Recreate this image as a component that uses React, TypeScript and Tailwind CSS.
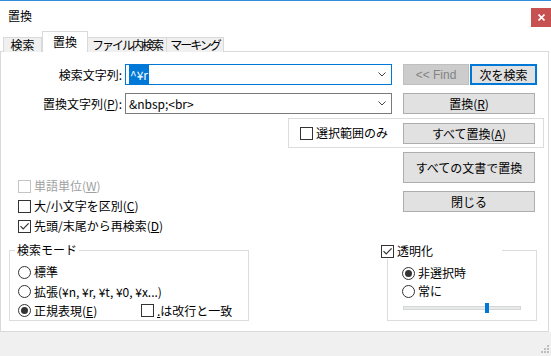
import type { ReactNode } from "react";

const Box = ({ checked, disabled }: { checked?: boolean; disabled?: boolean }) => (
  <span
    className={`flex h-[13px] w-[13px] shrink-0 items-center justify-center border bg-white ${
      disabled ? "border-[#c4c4c4]" : "border-[#333333]"
    }`}
  >
    {checked && (
      <svg width="11" height="11" viewBox="0 0 11 11">
        <path d="M1.5 5.2 L4.2 8 L9.6 2.4" stroke="#333" strokeWidth="1.2" fill="none" />
      </svg>
    )}
  </span>
);

const Radio = ({ on }: { on?: boolean }) => (
  <span className="flex h-[13px] w-[13px] shrink-0 items-center justify-center rounded-full border border-[#333333] bg-white">
    {on && <span className="h-[7px] w-[7px] rounded-full bg-[#333333]" />}
  </span>
);

const Btn = ({ children, className = "" }: { children: ReactNode; className?: string }) => (
  <div
    className={`flex items-center justify-center border border-[#adadad] bg-[#e1e1e1] text-black ${className}`}
  >
    {children}
  </div>
);

const Combo = ({ children, focused }: { children: ReactNode; focused?: boolean }) => (
  <div
    className={`ml-[3px] flex h-[21px] w-[267px] items-center border bg-white pl-[3px] pr-[5px] ${
      focused ? "border-[#0078d7]" : "border-[#7a7a7a]"
    }`}
  >
    <div className="flex-1 whitespace-nowrap">{children}</div>
    <svg width="8" height="5" viewBox="0 0 8 5">
      <path d="M0.5 0.5 L4 4 L7.5 0.5" stroke="#444" strokeWidth="1" fill="none" />
    </svg>
  </div>
);

export default function App() {
  return (
    <div className="relative flex h-[356px] w-[551px] flex-col overflow-hidden border-t border-[#2f8de0] bg-white font-['Noto_Sans_CJK_JP','Liberation_Sans',sans-serif] text-[12px] leading-[16px] text-black">
      {/* title bar */}
      <div className="flex h-[30px] shrink-0 items-start justify-between">
        <span className="mt-[7px] ml-[8px]">置換</span>
        <div className="mt-[7px] flex h-[19px] w-[20px] items-center justify-center bg-[#c75050]">
          <svg width="7" height="7" viewBox="0 0 7 7">
            <path d="M0.5 0.5 L6.5 6.5 M6.5 0.5 L0.5 6.5" stroke="#fff" strokeWidth="1.6" />
          </svg>
        </div>
      </div>

      {/* tabs */}
      <div className="relative z-10 -mb-px flex h-[21px] shrink-0 items-end pl-[3px]">
        <div className="flex h-[15px] w-[39px] shrink-0 items-center justify-center border border-b-0 border-[#d9d9d9] bg-[#f0f0f0]">
          検索
        </div>
        <div className="flex h-[21px] w-[46px] shrink-0 items-start justify-center border border-b-0 border-[#d9d9d9] bg-white pt-[2px]">
          置換
        </div>
        <div className="flex h-[15px] w-[79px] shrink-0 items-center justify-center overflow-hidden whitespace-nowrap border border-b-0 border-l-0 border-[#d9d9d9] bg-[#f0f0f0] tracking-[-2px]">
          ファイル内検索
        </div>
        <div className="flex h-[15px] w-[57px] shrink-0 items-center justify-center overflow-hidden whitespace-nowrap border border-b-0 border-l-0 border-[#d9d9d9] bg-[#f0f0f0] tracking-[-2px]">
          マーキング
        </div>
      </div>

      {/* tab panel */}
      <div className="flex h-[281px] w-[549px] shrink-0 flex-col border border-[#d9d9d9] bg-white">
        <div className="mt-[12px] flex h-[21px] items-center">
          <span className="w-[121px] text-right">検索文字列:</span>
          <Combo focused>
            <span className="bg-[#0078d7] px-px py-px text-white">^¥r</span>
          </Combo>
          <div className="ml-[11px] flex h-[21px] w-[66px] items-center justify-center border border-[#bfbfbf] bg-[#cccccc] font-['Liberation_Sans',sans-serif] text-[#838383]">
            &lt;&lt; Find
          </div>
          <div className="ml-px flex h-[21px] w-[67px] items-center justify-center border-2 border-[#0078d7] bg-[#e1e1e1]">
            次を検索
          </div>
        </div>

        <div className="mt-[8px] flex h-[21px] items-center">
          <span className="w-[121px] text-right">
            置換文字列(<u>P</u>):
          </span>
          <Combo>&amp;nbsp;&lt;br&gt;</Combo>
          <Btn className="ml-[11px] h-[21px] w-[132px]">
            置換(<u>R</u>)
          </Btn>
        </div>

        <div className="mt-[4px] ml-[287px] flex h-[30px] w-[256px] items-center border border-[#dcdcdc] pl-[11px]">
          <div className="flex w-[103px] items-center gap-[3px]">
            <Box />
            <span>選択範囲のみ</span>
          </div>
          <Btn className="mt-px h-[21px] w-[132px]">
            すべて置換(<u>A</u>)
          </Btn>
        </div>

        <div className="flex flex-1">
          {/* left column */}
          <div className="flex w-[380px] flex-col pt-[28px]">
            <div className="flex h-5 items-center gap-[3px] pl-[17px] text-[#a0a0a0]">
              <Box disabled />
              <span>
                単語単位(<u>W</u>)
              </span>
            </div>
            <div className="flex h-5 items-center gap-[3px] pl-[17px]">
              <Box />
              <span>
                大/小文字を区別(<u>C</u>)
              </span>
            </div>
            <div className="flex h-5 items-center gap-[3px] pl-[17px]">
              <Box checked />
              <span>
                先頭/末尾から再検索(<u>D</u>)
              </span>
            </div>

            <div className="relative mt-[14px] ml-[8px] flex h-[71px] w-[240px] flex-col border border-[#dcdcdc] pt-[11px] pl-[8px]">
              <span className="absolute -top-[9px] left-[5px] bg-white px-[2px]">検索モード</span>
              <div className="flex h-5 items-center gap-[3px]">
                <Radio />
                <span>標準</span>
              </div>
              <div className="flex h-[19px] items-center gap-[3px]">
                <Radio />
                <span className="whitespace-nowrap">拡張(¥n, ¥r, ¥t, ¥0, ¥x...)</span>
              </div>
              <div className="flex h-[19px] items-center">
                <div className="flex w-[123px] items-center gap-[3px]">
                  <Radio on />
                  <span>
                    正規表現(<u>E</u>)
                  </span>
                </div>
                <div className="flex items-center gap-[3px]">
                  <Box />
                  <span>
                    <u>.</u>は改行と一致
                  </span>
                </div>
              </div>
            </div>
          </div>

          {/* right column */}
          <div className="flex flex-col">
            <Btn className="mt-[4px] ml-[22px] h-[31px] w-[132px]">すべての文書で置換</Btn>
            <Btn className="mt-[8px] ml-[22px] h-[21px] w-[132px]">閉じる</Btn>

            <div className="relative mt-[38px] ml-[6px] flex h-[71px] w-[150px] flex-col border border-[#dcdcdc] pt-[13px] pl-[14px]">
              <div className="absolute -top-[8px] -left-[7px] flex h-[16px] w-[121px] items-center gap-[3px] bg-white">
                <Box checked />
                <span>透明化</span>
              </div>
              <div className="flex h-[18px] items-center gap-[3px]">
                <Radio on />
                <span>非選択時</span>
              </div>
              <div className="flex h-[18px] items-center gap-[3px]">
                <Radio />
                <span>常に</span>
              </div>
              <div className="relative mt-[6px] ml-px h-[4px] w-[118px] border border-[#d6d6d6] bg-[#e7eaea]">
                <div className="absolute -top-[4px] left-[81px] h-[10px] w-[4px] bg-[#0078d7]" />
              </div>
            </div>
          </div>
        </div>
      </div>

      {/* bottom strip with size grip */}
      <div className="flex flex-1 items-end justify-end bg-[#f0f0f0] pr-[2px] pb-[2px]">
        <svg width="9" height="9" viewBox="0 0 9 9">
          <rect x="7" y="0" width="2" height="2" fill="#bdbdbd" />
          <rect x="4" y="3" width="2" height="2" fill="#bdbdbd" />
          <rect x="7" y="3" width="2" height="2" fill="#bdbdbd" />
          <rect x="1" y="6" width="2" height="2" fill="#bdbdbd" />
          <rect x="4" y="6" width="2" height="2" fill="#bdbdbd" />
          <rect x="7" y="6" width="2" height="2" fill="#bdbdbd" />
        </svg>
      </div>
    </div>
  );
}
